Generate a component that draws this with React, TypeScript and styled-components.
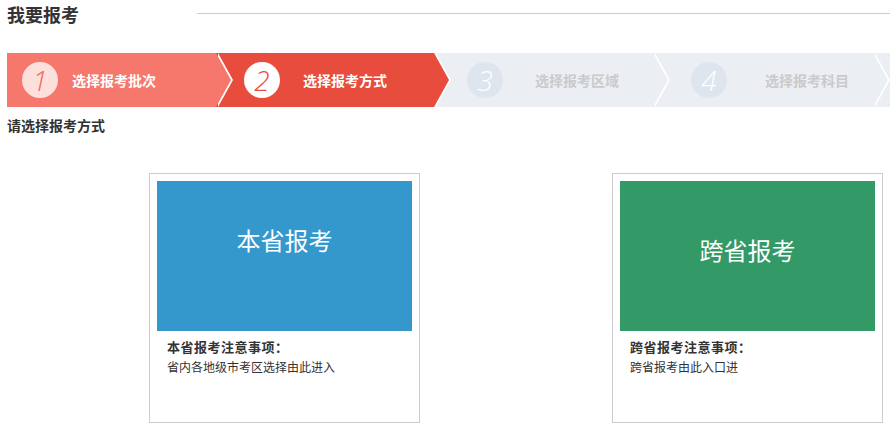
import * as React from 'react';
import styled, { createGlobalStyle } from 'styled-components';

const GlobalStyle = createGlobalStyle`
	html, body {
		margin: 0;
		padding: 0;
		background: #fff;
		overflow: hidden;
	}
	body {
		font-family: "Noto Sans CJK SC", "Noto Sans", sans-serif;
		color: #333;
	}
`;

const Page = styled.div`
	width: 890px;
	padding-left: 7px;
	box-sizing: border-box;
`;

const Header = styled.div`
	display: flex;
	align-items: center;
	height: 28px;
	h1 {
		width: 190px;
		margin: 0;
		font-size: 18px;
		font-weight: bold;
		line-height: 28px;
		color: #333;
	}
`;

const HeaderRule = styled.div`
	flex: 1;
	border-top: 1px solid #ccc;
	margin-top: -1px;
`;

const StepBar = styled.ol`
	display: flex;
	height: 54px;
	margin: 25px 0 0;
	padding: 0;
	list-style: none;
	background: #ebeef3;
`;

interface StepProps {
	$bg: string;
	$width: number;
	$inset: number;
	$gap: number;
}

const ARROW = 15;

const Step = styled.li<StepProps>`
	position: relative;
	display: flex;
	align-items: center;
	flex: none;
	width: ${p => p.$width}px;
	height: 54px;
	box-sizing: border-box;
	padding-left: ${p => p.$inset}px;
	gap: ${p => p.$gap}px;
	background: ${p => p.$bg};
	&::before,
	&::after {
		content: '';
		position: absolute;
		top: 0;
		width: 0;
		height: 0;
		border-top: 27px solid transparent;
		border-bottom: 27px solid transparent;
	}
	&::before {
		left: calc(100% + 1.5px);
		border-left: ${ARROW}px solid #fff;
		z-index: 1;
	}
	&::after {
		left: 100%;
		border-left: ${ARROW}px solid ${p => p.$bg};
		z-index: 2;
	}
`;

const StepNum = styled.span<{ $bg: string; $fg: string }>`
	display: flex;
	align-items: center;
	justify-content: center;
	width: 36px;
	height: 36px;
	border-radius: 50%;
	background: ${p => p.$bg};
	color: ${p => p.$fg};
	font-family: "Open Sans", "Liberation Sans", sans-serif;
	font-size: 28px;
	font-style: italic;
	font-weight: 300;
	line-height: 1;
`;

const StepLabel = styled.span<{ $fg: string }>`
	font-size: 14px;
	font-weight: bold;
	color: ${p => p.$fg};
	white-space: nowrap;
`;

const Prompt = styled.p`
	margin: 9px 0 0;
	font-size: 14px;
	font-weight: bold;
	line-height: 18px;
	color: #333;
`;

const Choices = styled.div`
	display: flex;
	gap: 192px;
	margin-top: 39px;
	padding-left: 142px;
`;

const Card = styled.a`
	display: block;
	width: 271px;
	height: 250px;
	box-sizing: border-box;
	padding: 7px;
	border: 1px solid #ccc;
	text-decoration: none;
	color: #333;
	h3 {
		margin: 6px 0 0 10px;
		font-size: 13px;
		font-weight: bold;
		line-height: 20px;
		letter-spacing: 0.5px;
	}
	p {
		margin: 0 0 0 10px;
		font-size: 12px;
		line-height: 20px;
	}
`;

const Tile = styled.div<{ $bg: string; $offset: number }>`
	height: 150px;
	box-sizing: border-box;
	padding-top: ${p => p.$offset}px;
	background: ${p => p.$bg};
	color: #fff;
	font-size: 24px;
	line-height: 30px;
	text-align: center;
`;

const steps = [
	{ n: 1, label: '选择报考批次', bg: '#f6776b', circle: '#fde0dc', num: '#ef6a5e', text: '#fff', width: 209, inset: 15, gap: 14 },
	{ n: 2, label: '选择报考方式', bg: '#e84c3d', circle: '#fff', num: '#e84c3d', text: '#fff', width: 218, inset: 28, gap: 23 },
	{ n: 3, label: '选择报考区域', bg: '#ebeef3', circle: '#dfe5ee', num: '#fff', text: '#cacaca', width: 219, inset: 33, gap: 32 },
	{ n: 4, label: '选择报考科目', bg: '#ebeef3', circle: '#dfe5ee', num: '#fff', text: '#cacaca', width: 220, inset: 38, gap: 38 },
];

const choices = [
	{ title: '本省报考', bg: '#3498cd', offset: 44, note: '本省报考注意事项：', desc: '省内各地级市考区选择由此进入' },
	{ title: '跨省报考', bg: '#339967', offset: 54, note: '跨省报考注意事项：', desc: '跨省报考由此入口进' },
];

export default function App() {
	return (
		<Page>
			<GlobalStyle />
			<Header>
				<h1>我要报考</h1>
				<HeaderRule />
			</Header>
			<StepBar>
				{steps.map(s => (
					<Step key={s.n} $bg={s.bg} $width={s.width} $inset={s.inset} $gap={s.gap}>
						<StepNum $bg={s.circle} $fg={s.num}>{s.n}</StepNum>
						<StepLabel $fg={s.text}>{s.label}</StepLabel>
					</Step>
				))}
			</StepBar>
			<Prompt>请选择报考方式</Prompt>
			<Choices>
				{choices.map(c => (
					<Card key={c.title} href="#">
						<Tile $bg={c.bg} $offset={c.offset}>{c.title}</Tile>
						<h3>{c.note}</h3>
						<p>{c.desc}</p>
					</Card>
				))}
			</Choices>
		</Page>
	);
}
